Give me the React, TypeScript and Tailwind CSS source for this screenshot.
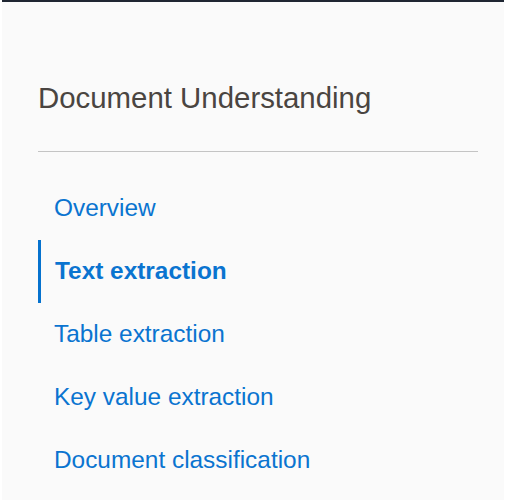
export default function App() {
  const items = ["Overview", "Text extraction", "Table extraction", "Key value extraction", "Document classification"];
  return (
    <div className="w-[509px] h-[500px] bg-white pl-[2px] pr-[5px]" style={{ fontFamily: '"Liberation Sans", Arial, sans-serif' }}>
      <div className="h-full bg-[#fafafa] border-t-2 border-[#1f2632] pl-[36px] pr-[26px] pt-[80px]">
        <div className="text-[29.4px] leading-[32px] text-[#4a4541]">Document Understanding</div>
        <div className="mt-[37px] h-px bg-[#c4c4c4]" />
        <div className="mt-[25px] flex flex-col">
          {items.map((t, i) => (
            <div
              key={t}
              className={
                i === 1
                  ? "h-[63px] flex items-center text-[24.4px] text-[#0a74d0] border-l-[3px] border-[#0572ce] font-bold pl-[14px]"
                  : "h-[63px] flex items-center text-[24.4px] text-[#0a74d0] pl-[16px]"
              }
            >
              {t}
            </div>
          ))}
        </div>
      </div>
    </div>
  );
}
